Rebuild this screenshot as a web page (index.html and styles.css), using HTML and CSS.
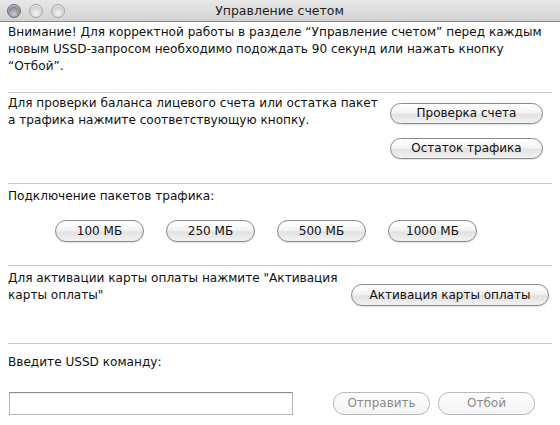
FILE: index.html
```html
<!DOCTYPE html>
<html lang="ru">
<head>
<meta charset="utf-8">
<title>Управление счетом</title>
<link rel="stylesheet" href="styles.css">
</head>
<body>
<div class="window">
  <div class="titlebar">
    <div class="lights">
      <span class="light light-dark"></span>
      <span class="light"></span>
      <span class="light"></span>
    </div>
    <div class="title">Управление счетом</div>
  </div>
  <div class="content">
    <p class="notice">Внимание! Для корректной работы в разделе “Управление счетом” перед каждым новым USSD-запросом необходимо подождать 90 секунд или нажать кнопку “Отбой”.</p>
    <hr class="sep sep1">
    <div class="row balance">
      <p class="text">Для проверки баланса лицевого счета или остатка пакет а трафика нажмите соответствующую кнопку.</p>
      <div class="btn-col">
        <button class="btn btn-wide">Проверка счета</button>
        <button class="btn btn-wide">Остаток трафика</button>
      </div>
    </div>
    <hr class="sep sep2">
    <p class="label">Подключение пакетов трафика:</p>
    <div class="packs">
      <button class="btn btn-pack">100 МБ</button>
      <button class="btn btn-pack">250 МБ</button>
      <button class="btn btn-pack">500 МБ</button>
      <button class="btn btn-pack">1000 МБ</button>
    </div>
    <hr class="sep sep3">
    <div class="row activate">
      <p class="text">Для активации карты оплаты нажмите "Активация карты оплаты"</p>
      <button class="btn btn-act">Активация карты оплаты</button>
    </div>
    <hr class="sep sep4">
    <p class="label label-ussd">Введите USSD команду:</p>
    <div class="ussd">
      <input class="ussd-input" type="text">
      <div class="ussd-btns">
        <button class="btn btn-dis" disabled>Отправить</button>
        <button class="btn btn-dis" disabled>Отбой</button>
      </div>
    </div>
  </div>
</div>
</body>
</html>
```
FILE: styles.css
```css
* { box-sizing: border-box; }
html, body { margin: 0; padding: 0; background: #fff; }
body {
  font-family: "DejaVu Sans", "Liberation Sans", sans-serif;
  font-size: 12.1px;
  color: #111;
}
.window { width: 560px; height: 425px; background: #fff; overflow: hidden; }
.titlebar {
  height: 22px;
  background: linear-gradient(#e8e8e8, #d2d2d2);
  border-bottom: 1px solid #8c8c8c;
  display: flex;
  align-items: center;
}
.lights { display: flex; gap: 8px; padding-left: 7px; }
.light {
  width: 14px; height: 14px; border-radius: 50%;
  background: radial-gradient(circle at 50% 70%, #f4f4f4 0%, #d9d9d9 45%, #b6b6b6 100%);
  border: 1px solid #a4a4a4;
  box-shadow: inset 0 1px 1px rgba(255,255,255,0.8);
}
.light-dark {
  background: radial-gradient(circle at 50% 75%, #c8ccd4 0%, #8e939c 50%, #5f646c 100%);
  border-color: #6a6d72;
}
.title {
  flex: 1;
  text-align: center;
  font-size: 12.5px;
  color: #222;
  margin-right: 66px;
}
.content { padding: 0 8px; }
p { margin: 0; }
.notice { line-height: 17px; margin-top: 2px; }
.sep { border: 0; border-top: 1px solid #c9c9c9; margin: 0; }
.sep1 { margin-top: 17px; }
.row { display: flex; justify-content: space-between; }
.balance { margin-top: 2px; }
.balance .text { width: 375px; line-height: 17px; }
.btn-col { display: flex; flex-direction: column; gap: 14px; margin-top: 8px; margin-right: 9px; }
.btn {
  font-family: inherit;
  font-size: 12px;
  color: #111;
  height: 21px;
  border: 1px solid #8a8a8a;
  border-radius: 11px;
  background: linear-gradient(#ffffff 0%, #f4f4f4 45%, #e2e2e2 55%, #f2f2f2 100%);
  box-shadow: 0 1px 1px rgba(0,0,0,0.12);
  padding: 0 10px;
  line-height: 19px;
}
.btn-wide { width: 153px; }
.sep2 { margin-top: 24px; }
.label { line-height: 17px; margin-top: 4px; }
.label-ussd { margin-top: 10px; }
.packs { display: flex; gap: 22px; margin-left: 47px; margin-top: 15px; }
.btn-pack { width: 89px; height: 22px; }
.sep3 { margin-top: 23px; }
.activate { margin-top: 4px; }
.activate .text { width: 330px; line-height: 17px; }
.btn-act { width: 198px; height: 22px; margin-top: 14px; margin-right: 3px; }
.sep4 { margin-top: 37px; }
.ussd { display: flex; align-items: center; margin-top: 21px; }
.ussd-input {
  width: 284px; height: 23px; margin-left: 1px;
  border: 1px solid #b5b5b5;
  border-top-color: #8d8d8d;
  background: #fff;
  box-shadow: inset 0 1px 1px rgba(0,0,0,0.08);
}
.ussd-btns { display: flex; gap: 8px; margin-left: 40px; }
.btn-dis {
  width: 97px; height: 23px;
  color: #8a8a8a;
  border-color: #b8b8b8;
  background: linear-gradient(#ffffff, #f3f3f3);
  box-shadow: none;
}
```
